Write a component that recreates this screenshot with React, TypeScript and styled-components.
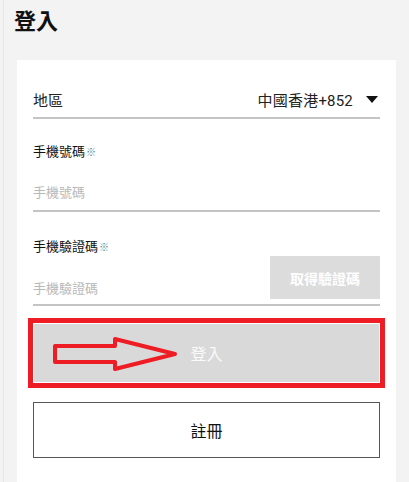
import styled, { createGlobalStyle } from 'styled-components';

const GlobalStyle = createGlobalStyle`
  html, body {
    margin: 0;
    padding: 0;
    background: #f3f3f3;
    font-family: Roboto, 'Noto Sans CJK TC', sans-serif;
    color: #222;
  }
`;

const Page = styled.div`
  height: 482px;
  overflow: hidden;
  margin-left: 3px;
  border-left: 1px solid #e6e6e6;
  padding-left: 10px;
`;

const Title = styled.h1`
  margin: 0;
  padding-top: 7px;
  font-size: 22px;
  line-height: 30px;
  font-weight: 700;
  color: #111;
`;

const Card = styled.div`
  margin: 23px 0 0 3px;
  width: 379px;
  min-height: 430px;
  background: #fff;
  padding: 22px 16px 0;
  box-sizing: border-box;
`;

const RegionRow = styled.div`
  display: flex;
  align-items: center;
  justify-content: space-between;
  height: 35px;
  border-bottom: 2px solid #c4c4c4;
  font-size: 15px;
`;

const RegionValue = styled.div`
  display: flex;
  align-items: center;
  gap: 13px;
  margin-right: 2px;
  letter-spacing: 0.2px;
`;

const Caret = styled.span`
  width: 0;
  height: 0;
  border-left: 6px solid transparent;
  border-right: 6px solid transparent;
  border-top: 7px solid #111;
`;

const Label = styled.div<{ $top: number }>`
  margin-top: ${(p) => p.$top}px;
  font-size: 13px;
  line-height: 18px;
  color: #111;
`;

const Mark = styled.span`
  font-size: 10px;
  color: #3d8d9c;
  margin-left: 1px;
`;

const FieldRow = styled.div`
  display: flex;
  align-items: flex-start;
  border-bottom: 2px solid #c4c4c4;
`;

const Input = styled.input<{ $h: number; $pt: number }>`
  flex: 1;
  min-width: 0;
  height: ${(p) => p.$h}px;
  padding: ${(p) => p.$pt}px 0 0;
  box-sizing: border-box;
  border: none;
  outline: none;
  background: transparent;
  font-family: inherit;
  font-size: 13px;
  color: #222;
  &::placeholder {
    color: #b8b8b8;
  }
`;

const CodeButton = styled.button`
  width: 110px;
  height: 43px;
  margin-top: -1px;
  border: none;
  background: #dcdcdc;
  color: #fff;
  font-family: inherit;
  font-size: 14px;
  font-weight: 700;
`;

const Highlight = styled.div`
  position: relative;
  margin: 12px -5px 0;
  border: 5px solid #ee1c25;
  padding: 1px;
  background: #fff;
`;

const LoginButton = styled.button`
  display: block;
  width: 100%;
  height: 58px;
  border: none;
  background: #d9d9d9;
  color: #fafafa;
  font-family: inherit;
  font-size: 16px;
`;

const Arrow = styled.svg`
  position: absolute;
  left: -5px;
  top: -5px;
  width: 357px;
  height: 70px;
  pointer-events: none;
`;

const RegisterButton = styled.button`
  display: block;
  width: 100%;
  height: 56px;
  margin-top: 14px;
  border: 1.5px solid #555;
  background: #fff;
  color: #111;
  font-family: inherit;
  font-size: 16px;
`;

export default function App() {
  return (
    <>
      <GlobalStyle />
      <Page>
        <Title>登入</Title>
        <Card>
          <RegionRow>
            <span>地區</span>
            <RegionValue>
              中國香港+852
              <Caret />
            </RegionValue>
          </RegionRow>

          <Label $top={24}>
            手機號碼<Mark>※</Mark>
          </Label>
          <FieldRow>
            <Input $h={48} $pt={12} placeholder="手機號碼" />
          </FieldRow>

          <Label $top={26}>
            手機驗證碼<Mark>※</Mark>
          </Label>
          <FieldRow>
            <Input $h={47} $pt={16} placeholder="手機驗證碼" />
            <CodeButton>取得驗證碼</CodeButton>
          </FieldRow>

          <Highlight>
            <LoginButton>登入</LoginButton>
            <Arrow viewBox="0 0 357 70">
              <polygon
                points="27,28 87,28 87,21 147,36 87,51 87,44 27,44"
                fill="none"
                stroke="#ee1c25"
                strokeWidth="4"
                strokeLinejoin="round"
              />
            </Arrow>
          </Highlight>

          <RegisterButton>註冊</RegisterButton>
        </Card>
      </Page>
    </>
  );
}
